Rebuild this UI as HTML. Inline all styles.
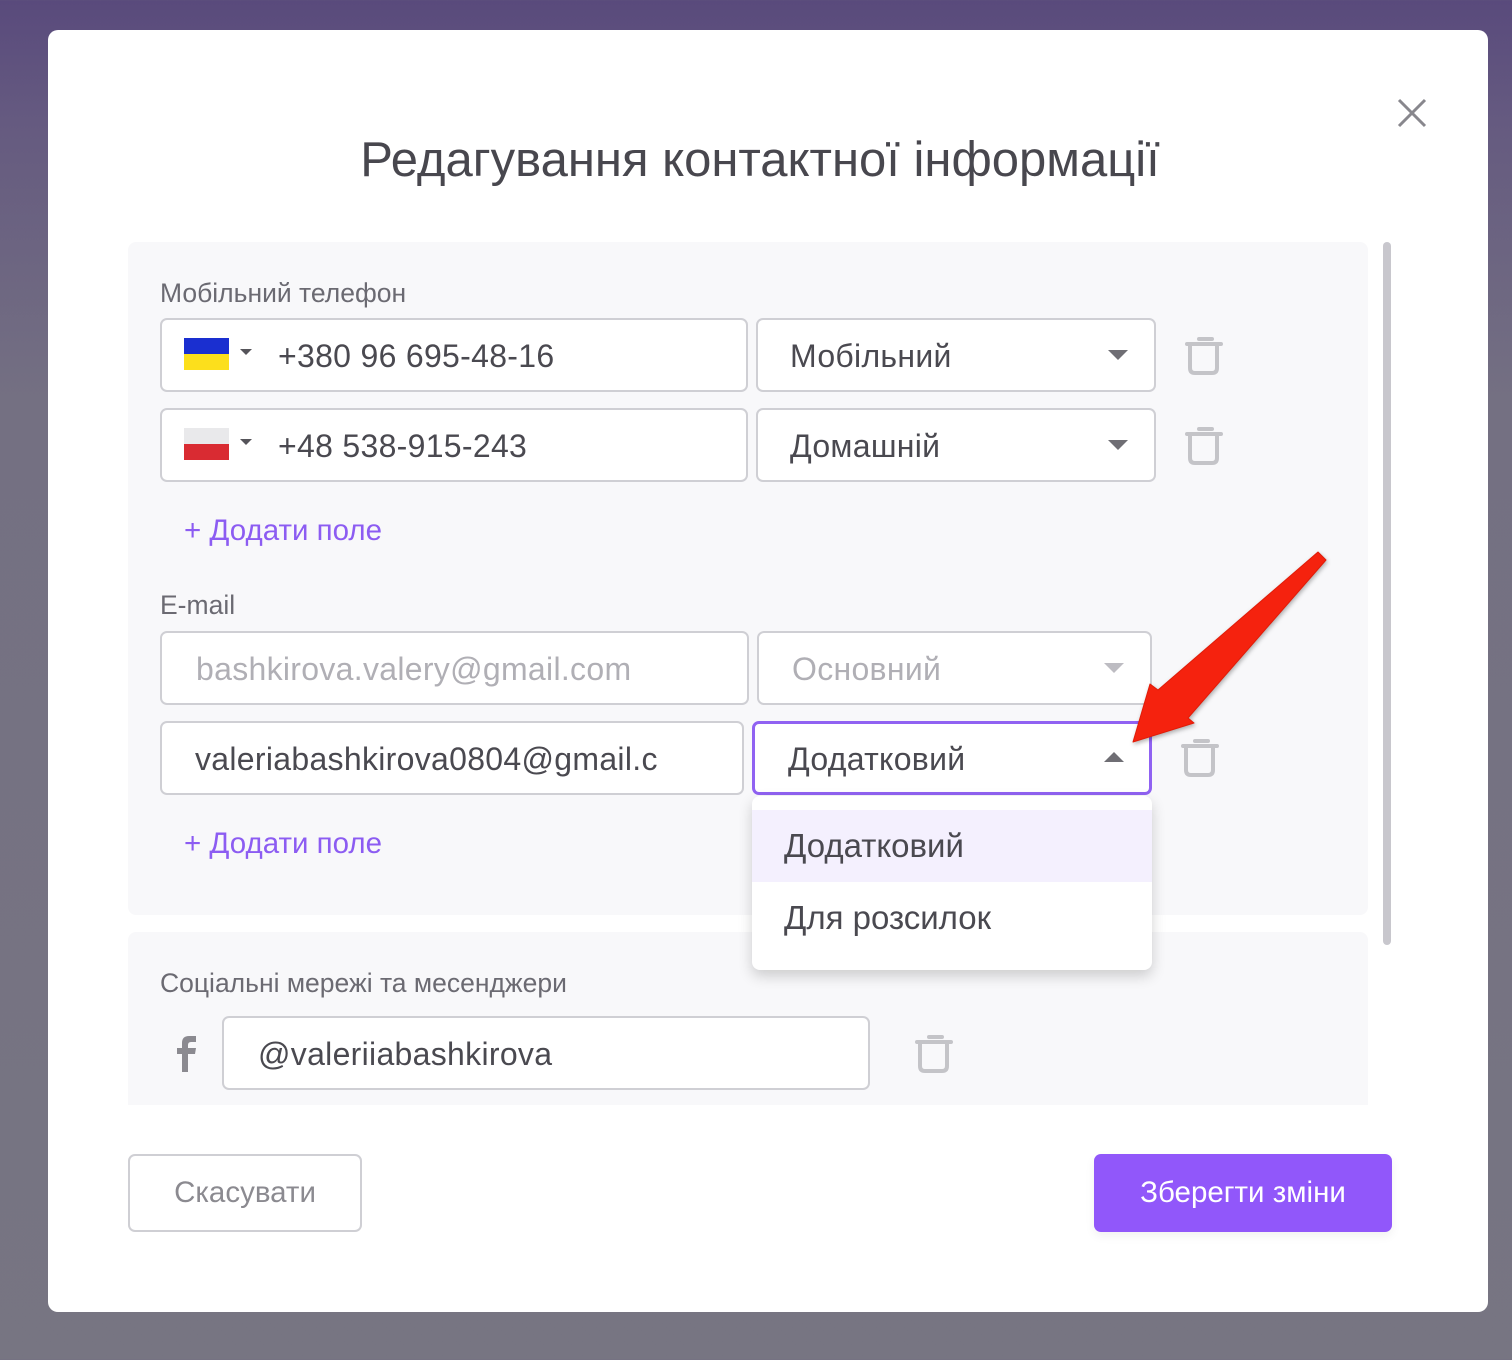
<!DOCTYPE html>
<html><head><meta charset="utf-8"><style>
*{margin:0;padding:0;box-sizing:border-box}
body{width:1512px;height:1360px;overflow:hidden;position:relative;font-family:"Liberation Sans",sans-serif;background:linear-gradient(180deg,#594a7c 0px,#655a80 120px,#747082 400px,#777582 1360px)}
.a{position:absolute}
.modal{left:48px;top:30px;width:1440px;height:1282px;background:#fff;border-radius:10px}
.sec{background:#f8f8fa;border-radius:8px}
.lbl{font-size:26.5px;color:#6b6a72}
.inp{background:#fff;border:2px solid #cfcfd4;border-radius:7px;font-size:32px;color:#4a4950;line-height:72px;letter-spacing:0.3px}
.add{font-size:29.5px;color:#8c5cf2}
.tri{width:0;height:0;border-left:10px solid transparent;border-right:10px solid transparent;border-top:10px solid #6f6e74}
</style></head><body>
<div class="a modal"></div>
<div class="a" style="left:1397px;top:98px;width:30px;height:30px">
<svg width="30" height="30"><path d="M2 2L28 28M28 2L2 28" stroke="#88878d" stroke-width="3"/></svg></div>
<div class="a" style="left:0;width:1520px;top:132px;text-align:center;font-size:49px;color:#48474e">Редагування контактної інформації</div>
<div class="a sec" style="left:128px;top:242px;width:1240px;height:673px"></div>
<div class="a sec" style="left:128px;top:932px;width:1240px;height:173px;border-radius:8px 8px 0 0"></div>
<div class="a" style="left:1383px;top:242px;width:8px;height:703px;background:#c8c7cd;border-radius:4px"></div>

<div class="a lbl" style="left:160px;top:278px">Мобільний телефон</div>
<div class="a inp" style="left:160px;top:318px;width:588px;height:74px;padding-left:116px">+380 96 695-48-16</div>
<div class="a" style="left:184px;top:338px;width:45px;height:16px;background:#1a2fd0"></div>
<div class="a" style="left:184px;top:354px;width:45px;height:16px;background:#fcdf1c"></div>
<div class="a tri" style="left:240px;top:349px;border-width:6px 6px 0 6px;border-top-color:#55545a"></div>
<div class="a inp" style="left:756px;top:318px;width:400px;height:74px;padding-left:32px">Мобільний</div>
<div class="a tri" style="left:1108px;top:350px"></div>

<div class="a inp" style="left:160px;top:408px;width:588px;height:74px;padding-left:116px">+48 538-915-243</div>
<div class="a" style="left:184px;top:428px;width:45px;height:16px;background:#e9e9eb"></div>
<div class="a" style="left:184px;top:444px;width:45px;height:16px;background:#d92b32"></div>
<div class="a tri" style="left:240px;top:439px;border-width:6px 6px 0 6px;border-top-color:#55545a"></div>
<div class="a inp" style="left:756px;top:408px;width:400px;height:74px;padding-left:32px">Домашній</div>
<div class="a tri" style="left:1108px;top:440px"></div>
<div class="a add" style="left:184px;top:514px">+ Додати поле</div>

<div class="a lbl" style="left:160px;top:590px">E-mail</div>
<div class="a inp" style="left:160px;top:631px;width:589px;height:74px;padding-left:34px;color:#b0afb5">bashkirova.valery@gmail.com</div>
<div class="a inp" style="left:757px;top:631px;width:395px;height:74px;padding-left:33px;color:#b0afb5">Основний</div>
<div class="a tri" style="left:1104px;top:663px;border-top-color:#bdbcc2"></div>
<div class="a inp" style="left:160px;top:721px;width:584px;height:74px;padding-left:33px">valeriabashkirova0804@gmail.c</div>
<div class="a inp" style="left:752px;top:721px;width:400px;height:74px;padding-left:33px;border:3px solid #9062f2;line-height:70px">Додатковий</div>
<div class="a tri" style="left:1104px;top:752px;border-top:none;border-bottom:10px solid #6f6e74"></div>
<div class="a add" style="left:184px;top:827px">+ Додати поле</div>

<div class="a" style="left:752px;top:796px;width:400px;height:174px;background:#fff;border-radius:8px;box-shadow:0 6px 14px rgba(0,0,0,0.18)"></div>
<div class="a" style="left:752px;top:810px;width:400px;height:72px;background:#f4f0fe"></div>
<div class="a" style="left:784px;top:827px;font-size:33px;color:#4a4950">Додатковий</div>
<div class="a" style="left:784px;top:899px;font-size:33px;color:#4a4950">Для розсилок</div>

<div class="a lbl" style="left:160px;top:968px">Соціальні мережі та месенджери</div>
<svg class="a" style="left:175px;top:1034px" width="24" height="38"><path d="M7 38V20H2V14H7V9Q7 2 14 2H21V8H16Q13 8 13 11V14H21L20 20H13V38Z" fill="#8b8a90"/></svg>
<div class="a inp" style="left:222px;top:1016px;width:648px;height:74px;padding-left:34px">@valeriiabashkirova</div>

<svg class="a" style="left:0;top:0" width="1512" height="1360">
<defs><g id="tr"><path d="M-4 -17H9" stroke="#c4c4c8" stroke-width="4" stroke-linecap="round"/><path d="M-16 -12H18" stroke="#c4c4c8" stroke-width="4" stroke-linecap="round"/><path d="M-13 -10V12Q-13 17 -8 17H9Q14 17 14 12V-10" stroke="#c4c4c8" stroke-width="4" fill="none"/></g></defs>
<use href="#tr" x="1203" y="356"/>
<use href="#tr" x="1203" y="446"/>
<use href="#tr" x="1199" y="758"/>
<use href="#tr" x="933" y="1054"/>
<path d="M1318 552L1326 560L1188 718L1194 723L1133 742L1150 684L1158 690Z" fill="#f5220e" stroke="#e01c08" stroke-width="1" stroke-linejoin="round" style="filter:drop-shadow(1px 2px 2px rgba(0,0,0,0.3))"/>
</svg>

<div class="a" style="left:128px;top:1154px;width:234px;height:78px;border:2px solid #cfcfd4;border-radius:7px;text-align:center;line-height:74px;font-size:29.5px;color:#8b8a90">Скасувати</div>
<div class="a" style="left:1094px;top:1154px;width:298px;height:78px;background:#9157fa;border-radius:7px;text-align:center;line-height:78px;font-size:29.5px;color:#fff;box-shadow:0 4px 10px rgba(0,0,0,0.06)">Зберегти зміни</div>
</body></html>
